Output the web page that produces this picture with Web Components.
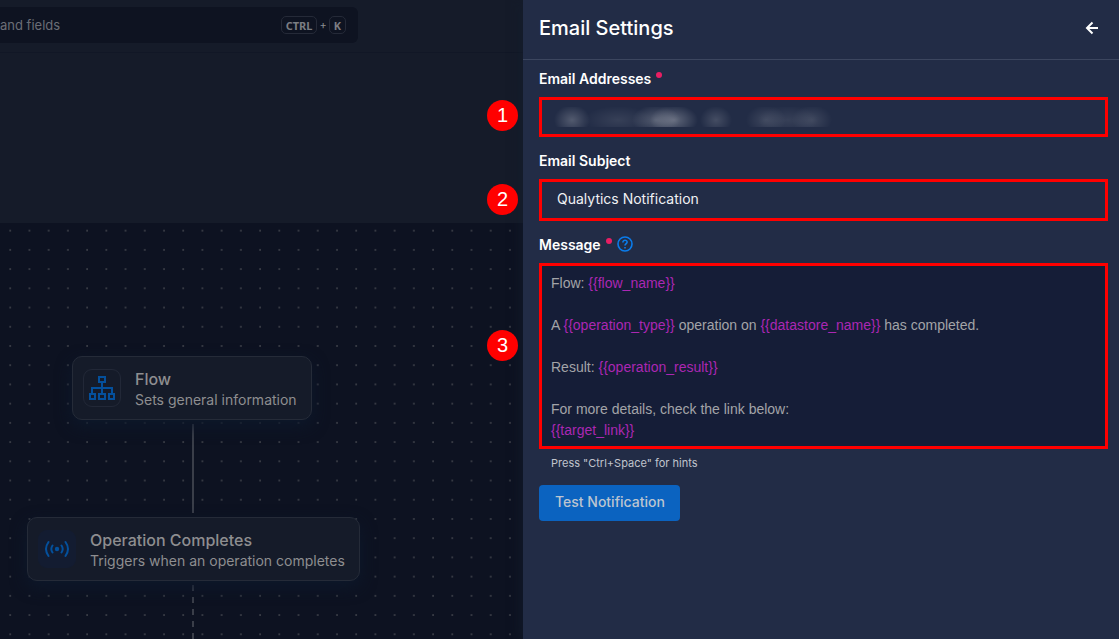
<!DOCTYPE html>
<html lang="en">
<head>
<meta charset="utf-8">
<meta name="viewport" content="width=device-width, initial-scale=1">
<title>Email Settings</title>
<style>
html, body { height: 100%; margin: 0; }
body { background: #151b29; overflow: hidden; font-family: Inter, "Liberation Sans", sans-serif; }
</style>
</head>
<body>
<app-shell>
  <top-search slot="top"></top-search>
  <flow-canvas slot="canvas">
    <flow-node slot="flow" heading="Flow" text="Sets general information">
      <svg slot="icon" width="28" height="26" viewBox="0 0 28 26" fill="none" stroke="#04509c" stroke-width="2" aria-hidden="true"><path d="M11 2h6v5h-6zM2 19h5v5H2zM11 19h6v5h-6zM21 19h5v5h-5zM14 7v12M4 19v-6h20v6"/></svg>
    </flow-node>
    <flow-node slot="operation" heading="Operation Completes" text="Triggers when an operation completes" filled>
      <svg slot="icon" width="26" height="18" viewBox="0 0 26 18" fill="none" stroke="#04509c" stroke-width="2" stroke-linecap="round" aria-hidden="true"><circle cx="13" cy="9" r="2.200" fill="#04509c" stroke="none"/><path d="M8.500 5.500q-2.400 3.500 0 7M17.500 5.500q2.400 3.500 0 7M4.500 2q-5 7 0 14M21.500 2q5 7 0 14"/></svg>
    </flow-node>
  </flow-canvas>
  <settings-drawer slot="drawer" heading="Email Settings">
    <email-field></email-field>
    <subject-field></subject-field>
    <message-field></message-field>
    <test-button>Test Notification</test-button>
  </settings-drawer>
</app-shell>
<script>
const define = (name, html, setup) => customElements.define(name, class extends HTMLElement {
  constructor() {
    super();
    this.attachShadow({ mode: "open" }).innerHTML = html;
  }
  connectedCallback() { if (setup) setup(this, this.shadowRoot); }
});

define("app-shell", `<style>
  :host { display: grid; grid-template-columns: minmax(0, 1fr) 596px; height: 100vh; color: #8a8c91; }
  main { display: grid; grid-template-rows: 53px 170px minmax(0, 1fr); min-width: 0; }
  header { display: flex; align-items: start; border-bottom: 1px solid #111726; padding-top: 7px; box-sizing: border-box; }
</style>
<main><header><slot name="top"></slot></header><div></div><slot name="canvas"></slot></main>
<slot name="drawer"></slot>`);

define("top-search", `<style>
  :host { display: block; width: 358px; }
  label { display: flex; align-items: center; height: 36px; gap: 2px; padding-right: 12px; box-sizing: border-box; background: #0e1321; border-radius: 0 6px 6px 0; font-size: 11px; }
  input { flex: 1; min-width: 0; border: 0; padding: 0; background: none; outline: 0; font: 13px Inter, sans-serif; color: #777a82; }
  input::placeholder { color: #6b6e76; opacity: 1; }
  kbd { display: flex; align-items: center; height: 18px; box-sizing: border-box; padding: 0 4px; border: 1px solid #252a38; border-radius: 5px; font: 700 11px "Noto Sans", sans-serif; color: #7b7d83; }
</style>
<label><input type="search" aria-label="Search" placeholder="and fields"><kbd>CTRL</kbd><span>+</span><kbd>K</kbd></label>`);

define("flow-canvas", `<style>
  :host { display: block; position: relative; overflow: hidden; background: #0d1221; }
  svg { display: block; width: 100%; height: 100%; }
  slot { position: absolute; display: block; }
  slot[name=flow] { left: 72px; top: 133px; }
  slot[name=operation] { left: 27px; top: 294px; }
</style>
<svg aria-hidden="true">
  <defs><pattern id="dots" x="9.200" y="6.700" width="19.220" height="19.220" patternUnits="userSpaceOnUse"><circle cx="1" cy="1" r=".72" fill="#6c6d70"/></pattern></defs>
  <rect width="100%" height="100%" fill="url(#dots)"/>
  <path d="M193 201v89" stroke="#3a3e49" stroke-width="2"/>
  <path d="M193 362v120" stroke="#3a3e49" stroke-width="2" stroke-dasharray="6"/>
</svg>
<slot name="flow"></slot><slot name="operation"></slot>`);

define("flow-node", `<style>
  :host { display: flex; align-items: center; gap: 14px; height: 64px; box-sizing: border-box; padding: 0 14px 0 10px; border: 1px solid #252b38; border-radius: 10px; background: #151b29; box-shadow: 0 6px 16px #0d182b; color: #8e8e90; }
  .icon { display: grid; place-items: center; width: 38px; height: 38px; box-sizing: border-box; border: 1px solid #222837; border-radius: 9px; }
  :host([filled]) .icon { background: #131c31; border-color: #131c31; }
  .text { display: grid; gap: 1px; padding-top: 2px; white-space: nowrap; }
  h3 { margin: 0; font-size: 16px; line-height: 20px; font-weight: 500; }
  p { margin: 0; font-size: 14px; line-height: 20px; }
</style>
<div class="icon"><slot name="icon"></slot></div><div class="text"><h3></h3><p></p></div>`, (host, root) => {
  root.querySelector("h3").textContent = host.getAttribute("heading");
  root.querySelector("p").textContent = host.getAttribute("text");
});

define("settings-drawer", `<style>
  :host { display: block; position: relative; background: #222c46; color: #fff; box-shadow: 0 0 12px #141d2d; }
  header { display: flex; align-items: center; justify-content: space-between; height: 60px; box-sizing: border-box; padding: 0 16px 4px; border-bottom: 1px solid #3c465f; }
  h2 { margin: 0; font-size: 20px; line-height: 28px; font-weight: 500; }
  button { display: grid; place-items: center; width: 22px; height: 22px; padding: 0; border: 0; background: none; color: #fff; }
  form { display: grid; gap: 14px; padding: 9px 11px 16px 16px; }
</style>
<header><h2></h2><button type="button" aria-label="Back"><svg width="14" height="14" viewBox="0 0 14 14" fill="none" stroke="currentColor" stroke-width="2"><path d="M13 7H2M7.500 1.500 2 7l5.500 5.500"/></svg></button></header>
<form><slot></slot></form>`, (host, root) => {
  root.querySelector("h2").textContent = host.getAttribute("heading");
});

define("step-badge", `<style>
  :host { position: absolute; display: grid; place-items: center; width: 31px; height: 31px; border-radius: 50%; background: #f00; color: #fff; font: 20px "Liberation Sans", Arial, sans-serif; }
</style><slot></slot>`);

const fieldStyle = `
  :host { display: grid; gap: 8px; position: relative; }
  .label { display: flex; align-items: center; height: 20px; box-sizing: border-box; padding-bottom: 2px; font-size: 14px; font-weight: 600; }
  .required { width: 6px; height: 6px; margin: 0 0 6px 5px; border-radius: 50%; background: #e91e63; }
  input, .editor { box-sizing: border-box; width: 100%; min-width: 0; border: 3px solid #f00; border-radius: 0; outline: 0; }
  input { padding: 0 15px 4px; background-color: #222c46; color: #f0f1f4; font: 14px Inter, sans-serif; }
  step-badge { left: -52px; }`;

define("email-field", `<style>${fieldStyle}
  input { height: 40px; background-repeat: no-repeat; background-position: 0 7px; background-size: 100% 20px;
    background-image:
      radial-gradient(ellipse 18px 15px at 30px 13px, #ffffff38, #ffffff00),
      radial-gradient(ellipse 34px 14px at 76px 13px, #ffffff18, #ffffff00),
      radial-gradient(ellipse 24px 15px at 114px 13px, #ffffff38, #ffffff00),
      radial-gradient(ellipse 24px 15px at 132px 13px, #ffffff48, #ffffff00),
      radial-gradient(ellipse 16px 14px at 174px 13px, #ffffff28, #ffffff00),
      radial-gradient(ellipse 20px 15px at 224px 13px, #ffffff20, #ffffff00),
      radial-gradient(ellipse 30px 15px at 246px 13px, #ffffff18, #ffffff00),
      radial-gradient(ellipse 20px 15px at 270px 13px, #ffffff20, #ffffff00); }
  step-badge { top: 31px; }
</style><label class="label" for="email">Email Addresses<span class="required"></span></label>
<input id="email" type="email" required><step-badge>1</step-badge>`);

define("subject-field", `<style>${fieldStyle}
  input { height: 42px; }
  step-badge { top: 33px; }
</style><label class="label" for="subject">Email Subject</label>
<input id="subject" type="text" value="Qualytics Notification"><step-badge>2</step-badge>`);

define("message-field", `<style>${fieldStyle}
  .label svg { margin-left: 5px; }
  .editor { min-height: 186px; padding: 7px 9px 5px; background: #151d37; color: #a3a4a8; font: 14px/21px "Liberation Sans", Arial, sans-serif; }
  .editor div { min-height: 21px; }
  .editor span { color: #ab27b3; }
  p { margin: -2px 0 0; padding-left: 12px; font-size: 11px; line-height: 16px; color: #c0c4cd; }
  step-badge { top: 95px; }
</style><div class="label"><span id="message-label">Message</span><span class="required"></span><svg width="16" height="16" viewBox="0 0 16 16" fill="none" stroke="#0a7cec" stroke-width="1.600" role="img" aria-label="Help"><circle cx="8" cy="8" r="7"/><path d="M5.900 6.400c0-3 4.400-2.700 4.200-.2C10 7.600 8 7.700 8 9.600M8 11v1.600"/></svg></div>
<div class="editor" contenteditable="true" role="textbox" aria-multiline="true" aria-labelledby="message-label" spellcheck="false"><div>Flow: <span>{{flow_name}}</span></div><div></div><div>A <span>{{operation_type}}</span> operation on <span>{{datastore_name}}</span> has completed.</div><div></div><div>Result: <span>{{operation_result}}</span></div><div></div><div>For more details, check the link below:</div><div><span>{{target_link}}</span></div></div>
<p>Press "Ctrl+Space" for hints</p><step-badge>3</step-badge>`);

define("test-button", `<style>
  :host { display: block; }
  button { height: 36px; padding: 0 15px 4px 16px; border: 0; border-radius: 4px; background: #0b63c0; color: #bdc5d0; font: 500 14px Inter, sans-serif; }
</style><button type="button"><slot></slot></button>`);
</script>
</body>
</html>
